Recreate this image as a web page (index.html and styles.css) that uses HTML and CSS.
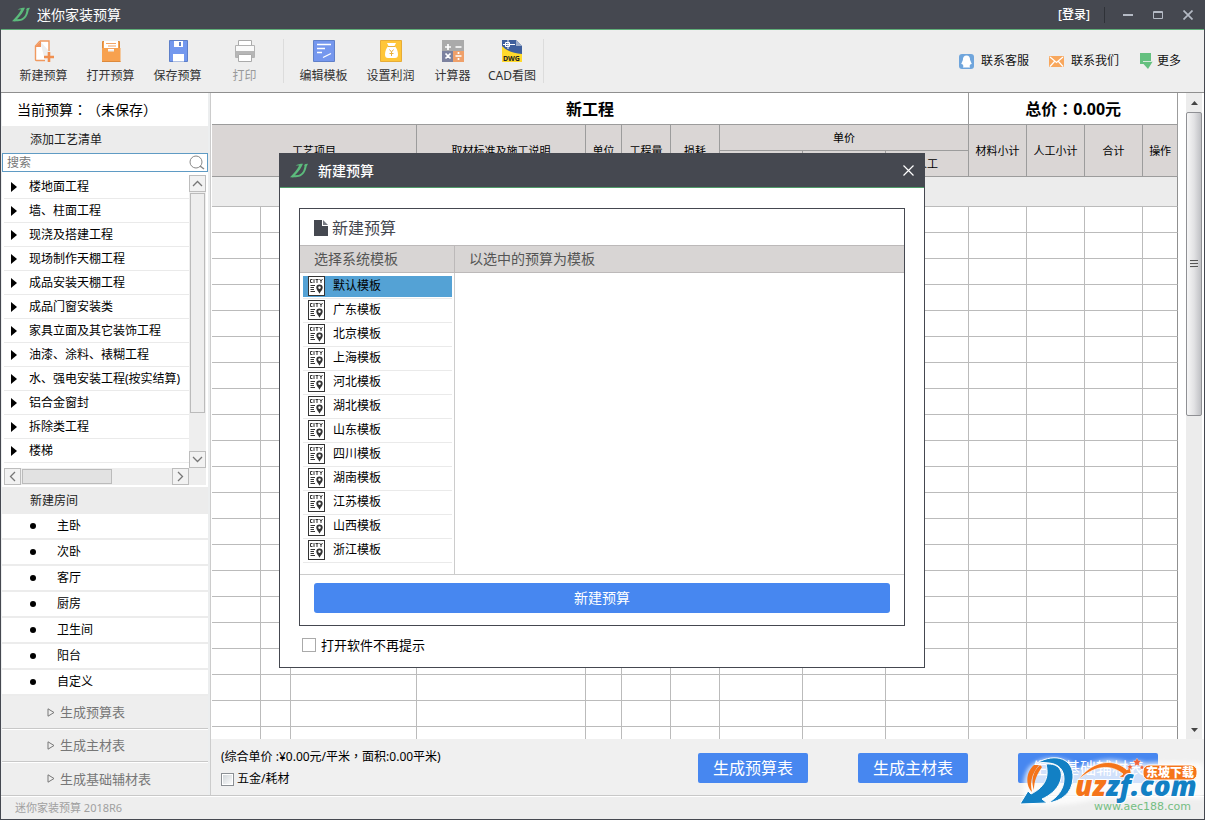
FILE: index.html
```
<!DOCTYPE html>
<html lang="zh-CN">
<head>
<meta charset="utf-8">
<title>迷你家装预算</title>
<link rel="stylesheet" href="styles.css">
</head>
<body>
<svg class="symbols" aria-hidden="true">
  <symbol id="brand" viewBox="0 0 18 15">
    <path d="M5.500 2.800C7.500 1.200 10 .8 13 .8 11.500 4.500 9 8.500 5 12.300l3.500-.4C12 11 13.800 8 14.500 3.500L14.200 2 15.500.900 18 .8 16.600 3.500C15.800 8.500 13.500 12.500 9 13.800 6.500 14.300 3 14.500 0 14.300 3.500 11 7 7 9.200 2.600 8 2.500 6.800 2.600 5.500 2.800Z" fill="#5cbb7c"/>
  </symbol>
  <symbol id="city" viewBox="0 0 17 20">
    <rect x=".5" y=".5" width="16" height="19" fill="#fff" stroke="#333"/>
    <path d="M4.500 3.500H2.500v3h2M6 3v4M7.500 3.500h3M9 3.500V7M11.500 3l1.500 2 1.500-2M13 5v2M2.500 9.500H7M2.500 11.500h3.500M2.500 13.500h3.500M2.500 15.500H7" fill="none" stroke="#333"/>
    <path fill-rule="evenodd" d="M11.500 8.500a3.200 3.200 0 0 1 3.200 3.200c0 2-1.800 3-3.200 6-1.400-3-3.200-4-3.200-6a3.200 3.200 0 0 1 3.200-3.200Zm0 1.800a1.300 1.300 0 1 0 0 2.600 1.300 1.300 0 0 0 0-2.600Z" fill="#333"/>
  </symbol>
</svg>

<div class="window">
  <header class="titlebar">
    <svg class="brand"><use href="#brand"/></svg>
    <h1>迷你家装预算</h1>
    <button class="login">[登录]</button>
    <span class="title-sep"></span>
    <button class="win-btn" aria-label="最小化"><svg width="10" height="10"><path d="M0 5h10" stroke="#b4bac4" stroke-width="2"/></svg></button>
    <button class="win-btn" aria-label="最大化"><svg width="10" height="10"><path d="M.5 1.500h9v7h-9ZM0 2.500h10" fill="none" stroke="#b4bac4"/></svg></button>
    <button class="win-btn" aria-label="关闭"><svg width="10" height="10"><path d="m.5.500 9 9m0-9-9 9" stroke="#b4bac4" stroke-width="1.700"/></svg></button>
  </header>

  <nav class="toolbar">
    <button class="tool">
      <svg width="22" height="24"><path d="M7 2h9v10M12 21.500H3.500q-1 0-1-1V7L7 2" fill="#fff" stroke="#f0995f" stroke-width="1.400"/><path d="M8 2V8H2Z" fill="#f2945c"/><path d="M16 13v10M11 18h10" stroke="#f08f50" stroke-width="2.600"/></svg>
      <span>新建预算</span></button>
    <button class="tool">
      <svg width="22" height="24"><path d="M2.500 2.500h17V10h-17Z" fill="#f7a14f" stroke="#dd8a3c"/><path d="M4 2h14v9H4Z" fill="#fff"/><path d="M6 4.500h10M8 7h8M7 9.500h8" stroke="#f2a366"/><path d="M2 9h6v3.500h6V9H20.500v14H2Z" fill="#f7a14f"/><path d="M2 22.500h18.500" stroke="#dd8a3c"/></svg>
      <span>打开预算</span></button>
    <button class="tool">
      <svg width="22" height="24"><path d="M2.500 1.500h18v21h-18Z" fill="#7398ee" stroke="#5d7fc9"/><path d="M7 2h9v6H7ZM6 15h11v7.500H6Z" fill="#fff"/><path d="M13 3v4" stroke="#5d7fc9" stroke-width="2"/></svg>
      <span>保存预算</span></button>
    <button class="tool" disabled>
      <svg width="22" height="24"><path d="M4.500 1.500h13v5h-13Z" fill="#fff" stroke="#aaa"/><path d="M1.500 6.500h19v12h-19Z" fill="#fafafa" stroke="#b2b2b2"/><path d="M2 12h18v6H2Z" fill="#b6b6b6"/><path d="M4.500 15.500h13v7h-13Z" fill="#fff" stroke="#aaa"/></svg>
      <span>打印</span></button>
    <span class="tool-sep"></span>
    <button class="tool">
      <svg width="22" height="24"><path d="M.5 1.500h21v21H.5Z" fill="#7597ee" stroke="#6080c8"/><path d="M4 5.500h14M4 9.500h8M4 13.500h5M10 18.500l8-4" stroke="#fff" stroke-width="1.300"/></svg>
      <span>编辑模板</span></button>
    <button class="tool">
      <svg width="22" height="24"><path d="M.5 1.500h21v21H.5Z" fill="#ffc638" stroke="#e7ac36"/><path d="M7 4h9l-1.500 3c2 1.500 3.500 5 3.500 8.500Q18 19 15 19H8q-3 0-3-3.500C5 12 6.500 8.500 8.500 7Z" fill="#fff"/><path d="M8 7.500h7M9.500 10.500l2 2.500 2-2.500M11.500 13v4M9.500 14.500h4" stroke="#e8af3b" fill="none"/></svg>
      <span>设置利润</span></button>
    <button class="tool tool-calc">
      <svg width="22" height="24"><path d="M0 1h22v22H0Z" fill="#aaa"/><path d="M0 12h11v11H0Z" fill="#7c829f"/><path d="M11 12h11v11H11Z" fill="#efa06a"/><path d="M6 5v6M3 8h6M13.500 8h6M3.500 14.500l5 5m0-5-5 5M13.500 17h6M16.500 13v2M16.500 19v2" stroke="#fff" stroke-width="1.700"/></svg>
      <span>计算器</span></button>
    <button class="tool tool-cad">
      <svg width="22" height="24"><path d="M1 1h14l6 6v16H1Z" fill="#3e5f9c"/><path d="M1 7q6 7 20 8v8H1Z" fill="#ffda2c"/><path d="M15 1v6h6Z" fill="#9bacc9"/><path d="M7 1v9M2 5.500h12M4.500 3.500h4v4h-4Z" stroke="#fff" fill="none"/><text x="2" y="22" class="dwg">DWG</text></svg>
      <span>CAD看图</span></button>
    <span class="tool-sep"></span>
    <div class="links">
      <a href="#"><svg width="15" height="15"><rect width="15" height="15" rx="3" fill="#6fa5dc"/><path d="M7.500 1.500C5 1.500 3.800 3.500 3.900 6L2.200 10l1.300.3 1 1.800L3.800 13.500h7.400l-.7-1.400 1-1.800 1.300-.3L11.100 6c.1-2.500-1.100-4.500-3.600-4.500Z" fill="#fff"/></svg>联系客服</a>
      <a href="#"><svg width="15" height="13"><rect y="1" width="15" height="11" rx="1" fill="#f8a75d"/><path d="m1 2 6.500 5.500L14 2M1 11.500 5.500 6.500m4 0L14 11.500" fill="none" stroke="#fff" stroke-width="1.200"/></svg>联系我们</a>
      <a href="#" class="more"><svg width="14" height="16"><path d="M1 0h11v8H14L9 16 4.500 11H1Z" fill="#64c07f"/><path d="M4 8.500H14" stroke="#d5eadb"/></svg>更多</a>
    </div>
  </nav>

  <main class="main">
    <aside class="sidebar">
      <p class="current">当前预算<span class="mid" lang="zh-Hant">：（</span>未保存<span class="mid" lang="zh-Hant">）</span></p>
      <h2 class="side-head">添加工艺清单</h2>
      <label class="search">
        <input type="text" placeholder="搜索" aria-label="搜索">
        <svg width="16" height="16"><circle cx="7" cy="7" r="6" fill="none" stroke="#888"/><path d="m11 11 4 3" stroke="#888" stroke-width="1.500"/></svg>
      </label>
      <div class="tree">
        <ul class="tree-list">
          <li>楼地面工程</li>
          <li>墙、柱面工程</li>
          <li>现浇及搭建工程</li>
          <li>现场制作天棚工程</li>
          <li>成品安装天棚工程</li>
          <li>成品门窗安装类</li>
          <li>家具立面及其它装饰工程</li>
          <li>油漆、涂料、裱糊工程</li>
          <li>水、强电安装工程(按实结算)</li>
          <li>铝合金窗封</li>
          <li>拆除类工程</li>
          <li>楼梯</li>
        </ul>
        <div class="vbar">
          <button class="bar-btn" aria-label="向上"><svg width="11" height="7"><path d="m1 6 4.500-4.500L10 6" fill="none" stroke="#777" stroke-width="1.300"/></svg></button>
          <span class="vthumb"></span>
          <button class="bar-btn" aria-label="向下"><svg width="11" height="7"><path d="m1 1 4.500 4.500L10 1" fill="none" stroke="#777" stroke-width="1.300"/></svg></button>
        </div>
        <div class="hbar">
          <button class="bar-btn" aria-label="向左"><svg width="7" height="11"><path d="M6 1 1.500 5.500 6 10" fill="none" stroke="#777" stroke-width="1.300"/></svg></button>
          <span class="hthumb"></span>
          <button class="bar-btn" aria-label="向右"><svg width="7" height="11"><path d="m1 1 4.500 4.500L1 10" fill="none" stroke="#777" stroke-width="1.300"/></svg></button>
        </div>
      </div>
      <h2 class="side-head room-head">新建房间</h2>
      <ul class="rooms">
        <li>主卧</li><li>次卧</li><li>客厅</li><li>厨房</li><li>卫生间</li><li>阳台</li><li>自定义</li>
      </ul>
      <div class="reports">
        <button><svg width="8" height="9"><path d="M1 .800v7.400l6-3.700Z" fill="none" stroke="#777"/></svg>生成预算表</button>
        <button><svg width="8" height="9"><path d="M1 .800v7.400l6-3.700Z" fill="none" stroke="#777"/></svg>生成主材表</button>
        <button><svg width="8" height="9"><path d="M1 .800v7.400l6-3.700Z" fill="none" stroke="#777"/></svg>生成基础辅材表</button>
      </div>
    </aside>

    <section class="content">
      <div class="sheet">
        <div class="grid-wrap">
          <table class="grid">
            <colgroup>
              <col class="c49"><col class="c30"><col class="c126"><col class="c169"><col class="c36"><col class="c49"><col class="c49">
              <col class="c83"><col class="c83"><col class="c83"><col class="c58"><col class="c58"><col class="c58"><col class="c35">
            </colgroup>
            <thead>
              <tr class="sum"><th colspan="10">新工程</th><th colspan="4">总价<span class="mid" lang="zh-Hant">：</span>0.00元</th></tr>
              <tr><th colspan="3" rowspan="2">工艺项目</th><th rowspan="2">取材标准及施工说明</th><th rowspan="2">单位</th><th rowspan="2">工程量</th><th rowspan="2">损耗</th><th colspan="3">单价</th><th rowspan="2">材料小计</th><th rowspan="2">人工小计</th><th rowspan="2">合计</th><th rowspan="2">操作</th></tr>
              <tr><th>主材</th><th>辅材</th><th>人工</th></tr>
            </thead>
            <tbody>
              <tr class="group"><td colspan="14"></td></tr>
              <tr><td><td><td><td><td><td><td><td><td><td><td><td><td><td></tr>
              <tr><td><td><td><td><td><td><td><td><td><td><td><td><td><td></tr>
              <tr><td><td><td><td><td><td><td><td><td><td><td><td><td><td></tr>
              <tr><td><td><td><td><td><td><td><td><td><td><td><td><td><td></tr>
              <tr><td><td><td><td><td><td><td><td><td><td><td><td><td><td></tr>
              <tr><td><td><td><td><td><td><td><td><td><td><td><td><td><td></tr>
              <tr><td><td><td><td><td><td><td><td><td><td><td><td><td><td></tr>
              <tr><td><td><td><td><td><td><td><td><td><td><td><td><td><td></tr>
              <tr><td><td><td><td><td><td><td><td><td><td><td><td><td><td></tr>
              <tr><td><td><td><td><td><td><td><td><td><td><td><td><td><td></tr>
              <tr><td><td><td><td><td><td><td><td><td><td><td><td><td><td></tr>
              <tr><td><td><td><td><td><td><td><td><td><td><td><td><td><td></tr>
              <tr><td><td><td><td><td><td><td><td><td><td><td><td><td><td></tr>
              <tr><td><td><td><td><td><td><td><td><td><td><td><td><td><td></tr>
              <tr><td><td><td><td><td><td><td><td><td><td><td><td><td><td></tr>
              <tr><td><td><td><td><td><td><td><td><td><td><td><td><td><td></tr>
              <tr><td><td><td><td><td><td><td><td><td><td><td><td><td><td></tr>
              <tr><td><td><td><td><td><td><td><td><td><td><td><td><td><td></tr>
              <tr><td><td><td><td><td><td><td><td><td><td><td><td><td><td></tr>
              <tr><td><td><td><td><td><td><td><td><td><td><td><td><td><td></tr>
              <tr><td><td><td><td><td><td><td><td><td><td><td><td><td><td></tr>
            </tbody>
          </table>
        </div>
        <div class="main-bar">
          <button aria-label="向上滚动"><svg width="7" height="4"><path d="M0 4 3.500 0 7 4Z" fill="#444"/></svg></button>
          <span class="main-thumb"><svg width="8" height="9"><path d="M0 .5h8M0 3.500h8M0 6.500h8" stroke="#555"/><path d="M0 1.500h8M0 4.500h8M0 7.500h8" stroke="#ddd"/></svg></span>
          <button class="down" aria-label="向下滚动"><svg width="7" height="4"><path d="M0 0 3.500 4 7 0Z" fill="#444"/></svg></button>
        </div>
      </div>
      <footer class="totals">
        <div class="summary">
          <p>(综合单价 :¥0.00元/平米<span class="mid" lang="zh-Hant">，</span>面积:0.00平米)</p>
          <label><input type="checkbox">五金/耗材</label>
        </div>
        <div class="actions">
          <button>生成预算表</button>
          <button>生成主材表</button>
          <button class="wide">生成基础辅材表</button>
        </div>
      </footer>
    </section>
  </main>

  <div class="status">迷你家装预算 2018R6</div>

  <svg class="watermark" width="184" height="64" viewBox="0 0 184 64" role="img" aria-label="东坡下载 uzzf.com">
    <defs><filter id="glow" x="-10%" y="-10%" width="120%" height="130%"><feGaussianBlur stdDeviation="2"/></filter></defs>
    <path d="M9 12Q25-2 48 6q9 3 7 10Q82-2 110 8q8-4 16 0 8-2 54 0 5 2 4 14v22H78q-30 8-70 7Q-2 30 9 12Z" fill="#fff" opacity=".75" filter="url(#glow)"/>
    <path d="M14 10C5 18 6 31 12 37c-2-9-1-17 7-27Z" fill="#f5741a"/>
    <path d="M20 10c-8 7-9 17-6 25 0-9 3-16 8-23Z" fill="#f5741a"/>
    <path d="M17 8C36-3 54 4 53 23 52 39 41 46 28 48c10-6 16-14 16-24 0-9-5-15-15-16q-6-1-12 0Z" fill="#1280c4" stroke="#fff"/>
    <path d="M26 9c13-1 18 7 14 18-3 8-11 14-18 17l5 4-27 1 8-13 3 3C23 33 30 24 26 9Z" fill="#1280c4" stroke="#fff"/>
    <path d="M58 25C75 2 97 5 107 15l3-4 2 13-13-2 4-3C91 9 75 10 58 25Z" fill="#f5741a" stroke="#fff" stroke-width=".7"/>
    <text x="55" y="41" class="wm-text"><tspan fill="#f5741a">uz</tspan><tspan fill="#1280c4">zf.com</tspan></text>
    <path d="m117 3 1.500 2.500L121 6l-2 2 .3 3-2.300-1.200-2.300 1.200.300-3-2-2 2.500-.5ZM110 9l1 2h2l-1.500 1.500.5 2-2-1-2 1 .5-2L107 11h2ZM122 10l1 1.500h1.500L123.300 13l.4 1.500-1.700-.7-1.700.7.4-1.500-1.200-1.500h1.500Z" fill="#f0643c" stroke="#fff" stroke-width=".3"/>
    <rect x="123" y="10" width="54" height="15" rx="6" fill="#f5741a" stroke="#fff"/>
    <text x="126" y="22" class="wm-tag">东坡下载</text>
    <text x="74" y="55" class="wm-url">www.aec188.com</text>
  </svg>

  <section class="dialog" role="dialog" aria-labelledby="dlg-title">
    <header class="dlg-bar">
      <svg class="brand"><use href="#brand"/></svg>
      <h2 id="dlg-title">新建预算</h2>
      <button aria-label="关闭"><svg width="11" height="11"><path d="m.5.500 10 10m0-10-10 10" stroke="#fff" stroke-width="1.200"/></svg></button>
    </header>
    <div class="dlg-body">
      <div class="panel">
        <h3><svg width="14" height="16"><path d="M0 0h8v6h6v10H0Z" fill="#454850"/><path d="M9 0l5 5H9Z" fill="#777a82"/></svg>新建预算</h3>
        <div class="panel-cols">
          <h4>选择系统模板</h4>
          <h4>以选中的预算为模板</h4>
          <ul class="templates">
            <li class="on"><svg><use href="#city"/></svg>默认模板</li>
            <li><svg><use href="#city"/></svg>广东模板</li>
            <li><svg><use href="#city"/></svg>北京模板</li>
            <li><svg><use href="#city"/></svg>上海模板</li>
            <li><svg><use href="#city"/></svg>河北模板</li>
            <li><svg><use href="#city"/></svg>湖北模板</li>
            <li><svg><use href="#city"/></svg>山东模板</li>
            <li><svg><use href="#city"/></svg>四川模板</li>
            <li><svg><use href="#city"/></svg>湖南模板</li>
            <li><svg><use href="#city"/></svg>江苏模板</li>
            <li><svg><use href="#city"/></svg>山西模板</li>
            <li><svg><use href="#city"/></svg>浙江模板</li>
          </ul>
          <div></div>
        </div>
        <div class="panel-foot"><button>新建预算</button></div>
      </div>
      <label class="skip"><input type="checkbox">打开软件不再提示</label>
    </div>
  </section>
</div>
</body>
</html>
```
FILE: styles.css
```
* { box-sizing: border-box; }

body {
  margin: 0;
  font: 12px/16px "Noto Sans", "Noto Sans CJK SC", sans-serif;
  color: #000;
  text-spacing-trim: space-all;
}

h1, h2, h3, h4, p, ul { margin: 0; padding: 0; font-weight: normal; }
ul { list-style: none; }
svg { display: block; flex: none; }

button {
  margin: 0;
  padding: 0;
  border: 0;
  background: none;
  font: inherit;
  color: inherit;
}

.symbols { position: absolute; width: 0; height: 0; }
.mid { font-family: "Noto Sans CJK TC", sans-serif; }
.brand { width: 18px; height: 15px; }

.window {
  position: relative;
  display: flex;
  flex-direction: column;
  height: 100vh;
  border: 1px solid #454850;
  border-top: 0;
  background: #eee;
  overflow: hidden;
}

/* title bar */
.titlebar {
  display: flex;
  align-items: center;
  height: 30px;
  padding: 0 1px 0 11px;
  background: #454850;
  border-bottom: 1px solid #5fae78;
  color: #fff;
}
.titlebar h1 { margin: 0 auto 0 7px; font-size: 14px; line-height: 20px; }
.login { margin-right: 14px; font-weight: 500; }
.title-sep { width: 1px; height: 16px; margin-right: 8px; background: #2f3238; }
.win-btn { display: grid; place-items: center; width: 30px; height: 28px; }

/* toolbar */
.toolbar {
  display: flex;
  align-items: center;
  height: 63px;
  padding-left: 9px;
  background: #eee;
  border-bottom: 1px solid #8f8f8f;
}
.tool {
  display: flex;
  flex-direction: column;
  align-items: center;
  gap: 5px;
  width: 67px;
  color: #333;
}
.tool:disabled { color: #999; }
.tool-calc { width: 57px; }
.tool-cad { width: 62px; }
.tool-sep { width: 1px; height: 44px; margin: 0 6px 0 5px; background: #dcdcdc; }
.tool-cad + .tool-sep { margin: 0; }
.dwg { font: bold 7px "Noto Sans", sans-serif; fill: #222; }
.links { display: flex; gap: 20px; margin-left: auto; padding-right: 23px; }
.links a {
  display: flex;
  align-items: center;
  gap: 7px;
  color: #111;
  text-decoration: none;
}
.links .more { gap: 4px; }

/* sidebar */
.main { display: flex; flex: 1; min-height: 0; }
.sidebar {
  display: flex;
  flex-direction: column;
  width: 210px;
  padding: 0 2px 0 1px;
  background: #eceeef;
  border-right: 1px solid #ccc;
}
.current { padding-left: 15px; background: #fff; font-size: 14px; line-height: 33px; height: 33px; white-space: nowrap; }
.side-head { padding-left: 28px; font-size: 12px; line-height: 27px; background: #ececec; color: #222; }
.search {
  display: flex;
  align-items: center;
  height: 20px;
  padding-right: 2px;
  background: #fff;
  border: 1px solid #5f9bc4;
}
.search input {
  flex: 1;
  min-width: 0;
  padding: 0 4px;
  border: 0;
  outline: 0;
  background: none;
  font: inherit;
}
.search input::placeholder { color: #777; }
.tree {
  display: grid;
  grid-template-columns: 1fr 17px;
  grid-template-rows: 293px 17px;
  padding: 3px 2px 2px;
  background: #fff;
}
.tree-list { overflow: hidden; }
.tree-list li {
  display: flex;
  align-items: center;
  height: 24px;
  padding-left: 7px;
  border-bottom: 1px solid #eaeaea;
  white-space: nowrap;
}
.tree-list li::before {
  content: "";
  margin-right: 12px;
  border: 5px solid transparent;
  border-left: 6px solid #000;
  border-right: 0;
}
.vbar, .hbar { display: flex; background: #eee; }
.vbar { flex-direction: column; }
.hbar { grid-column: 1 / 3; padding-right: 17px; }
.bar-btn {
  display: grid;
  place-items: center;
  width: 17px;
  height: 17px;
  background: #f2f2f2;
  border: 1px solid #bdbdbd;
}
.vthumb { width: 15px; height: 220px; margin: 1px 1px auto; background: #eee; border: 1px solid #bbb; }
.hthumb { width: 90px; height: 15px; margin: 1px auto 1px 1px; background: #e2e2e2; border: 1px solid #bbb; }
.rooms li {
  display: flex;
  align-items: center;
  height: 26px;
  padding-left: 28px;
  background: #fff;
  border-bottom: 2px solid #ececec;
}
.rooms li::before {
  content: "";
  width: 6px;
  height: 6px;
  margin-right: 21px;
  border-radius: 50%;
  background: #000;
}
.reports { display: flex; flex: 1; flex-direction: column; background: #eee; }
.reports button {
  display: flex;
  align-items: center;
  gap: 5px;
  height: 33px;
  padding-left: 45px;
  border-bottom: 1px solid #c8c8c8;
  box-shadow: 0 1px #fff;
  font-size: 13px;
  color: #777;
}
.reports button:last-child { border: 0; box-shadow: none; }

/* estimate sheet */
.content { display: flex; flex: 1; flex-direction: column; min-width: 0; }
.sheet { display: flex; flex: 1; min-height: 0; padding: 0 2px 0 1px; background: #fff; }
.grid-wrap { flex: 1; margin-right: 8px; overflow: hidden; }
.grid { width: 100%; table-layout: fixed; border-spacing: 0; }
.grid th, .grid td { height: 26px; padding: 0; border: 0 solid #bbb; border-width: 0 1px 1px 0; }
.grid th { border-color: #9c9c9c; background: #dad6d5; font-size: 11px; font-weight: normal; white-space: nowrap; }
.grid .sum th { height: 32px; background: #fff; font-size: 16px; font-weight: bold; }
.grid .group td { height: 30px; background: #ececec; }
.grid td:last-child { border-right-color: #909090; }
.c30 { width: 30px; }
.c35 { width: 35px; }
.c36 { width: 36px; }
.c49 { width: 49px; }
.c58 { width: 58px; }
.c83 { width: 83px; }
.c126 { width: 126px; }
.c169 { width: 169px; }

.main-bar { display: flex; flex-direction: column; width: 16px; background: #ececec; }
.main-bar button { display: grid; place-items: center; height: 19px; }
.main-bar .down { margin-top: auto; }
.main-thumb {
  display: grid;
  place-items: center;
  height: 304px;
  border: 1px solid #8f9094;
  border-radius: 2px;
  background: linear-gradient(90deg, #f6f6f6, #e2e2e4 50%, #bfc0c4);
}

.totals {
  display: flex;
  justify-content: space-between;
  height: 56px;
  padding: 9px 46px 0 10px;
  background: #f0f0f0;
}
.summary { display: flex; flex-direction: column; gap: 7px; white-space: nowrap; }
.summary p { height: 16px; }
.summary label { display: flex; align-items: center; gap: 3px; }
input[type="checkbox"] {
  appearance: none;
  width: 13px;
  height: 13px;
  margin: 0;
  border: 1px solid #8b8f94;
  background: linear-gradient(135deg, #cdd2d6, #fff);
  box-shadow: inset 0 0 0 1px #fff;
}
.actions { display: flex; gap: 50px; padding-top: 5px; }
.actions button {
  width: 110px;
  height: 30px;
  border-radius: 2px;
  background: #4787f0;
  color: #fff;
  font-size: 16px;
}
.actions .wide { width: 140px; }

.status {
  height: 24px;
  padding-left: 14px;
  border-top: 1px solid #c8c8c8;
  box-shadow: inset 0 1px #fff;
  font-size: 11px;
  line-height: 24px;
  color: #a0a0a0;
}

/* site mark over the lower right corner */
.watermark { position: absolute; right: 0; bottom: 0; }
.wm-text { font: italic 900 28px "Noto Sans", sans-serif; stroke: #fff; stroke-width: 2px; paint-order: stroke; }
.wm-tag { font: 900 12px "Noto Sans CJK SC", sans-serif; fill: #fff; }
.wm-url { font: 11px "DejaVu Sans", sans-serif; fill: #74bd82; }

/* new-estimate dialog */
.dialog {
  position: absolute;
  inset: 153px 279px 151px 278px;
  display: flex;
  flex-direction: column;
  background: #fff;
  border: 1px solid #454850;
}
.dlg-bar {
  display: flex;
  align-items: center;
  height: 34px;
  padding: 0 10px;
  background: #454850;
  border-bottom: 1px solid #4f9d69;
  color: #fff;
}
.dlg-bar h2 { margin: 0 auto 0 10px; font-size: 14px; line-height: 20px; font-weight: 500; }
.dlg-body { display: flex; flex: 1; flex-direction: column; padding: 20px 19px 14px; }
.panel { display: flex; flex: 1; flex-direction: column; border: 1px solid #454850; }
.panel h3 {
  display: flex;
  align-items: center;
  gap: 4px;
  height: 36px;
  padding: 2px 0 0 14px;
  font-size: 16px;
  color: #454850;
}
.panel-cols {
  display: grid;
  flex: 1;
  grid-template-columns: 155px 1fr;
  grid-template-rows: 28px 1fr;
  border-bottom: 1px solid #ccc;
}
.panel-cols h4 {
  padding-left: 14px;
  background: #d8d5d4;
  border: 1px solid #bcb9b9;
  border-width: 1px 0;
  font-size: 14px;
  line-height: 26px;
  color: #555;
}
.panel-cols h4:first-child { border-right-width: 1px; }
.templates { padding: 2px 2px 0 3px; border-right: 1px solid #ccc; }
.templates li {
  display: flex;
  align-items: center;
  gap: 8px;
  height: 24px;
  padding: 1px 0 2px 5px;
  border-bottom: 1px solid #eaeaea;
}
.templates svg { width: 17px; height: 20px; }
.templates .on { background: linear-gradient(#54a2d5, #54a2d5) 0 1px / 100% 21px no-repeat; }
.panel-foot { padding: 8px 14px 12px; }
.panel-foot button {
  width: 100%;
  height: 30px;
  border-radius: 3px;
  background: #4787f0;
  color: #fff;
  font-size: 14px;
}
.skip { display: flex; align-items: center; gap: 5px; margin: 11px 0 0 3px; font-size: 13px; line-height: 16px; }
.skip input[type="checkbox"] { width: 14px; height: 14px; background: #fff; border-color: #aaa; }
```
